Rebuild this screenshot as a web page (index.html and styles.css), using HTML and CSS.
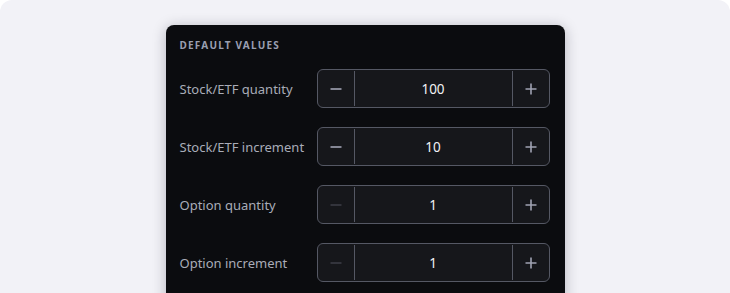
FILE: index.html
```html
<html lang="en">
	<head>
		<meta charset="UTF-8">
		<meta name="viewport" content="width=device-width, initial-scale=1.0">
		<title>Default values</title>
		<link rel="stylesheet" href="styles.css">
	</head>
	<body>
		<div class="backdrop">
			<div class="panel">
				<h3 class="panel-title">DEFAULT VALUES</h3>
				<div class="rows">
					<div class="row">
						<span class="row-label">Stock/ETF quantity</span>
						<div class="stepper">
							<button class="step minus">
								<svg width="12" height="12" viewBox="0 0 12 12"><path d="M0.5 6h11" /></svg>
							</button>
							<span class="value">100</span>
							<button class="step plus">
								<svg width="12" height="12" viewBox="0 0 12 12"><path d="M0.5 6h11M6 0.5v11" /></svg>
							</button>
						</div>
					</div>
					<div class="row">
						<span class="row-label">Stock/ETF increment</span>
						<div class="stepper">
							<button class="step minus">
								<svg width="12" height="12" viewBox="0 0 12 12"><path d="M0.5 6h11" /></svg>
							</button>
							<span class="value">10</span>
							<button class="step plus">
								<svg width="12" height="12" viewBox="0 0 12 12"><path d="M0.5 6h11M6 0.5v11" /></svg>
							</button>
						</div>
					</div>
					<div class="row">
						<span class="row-label">Option quantity</span>
						<div class="stepper">
							<button class="step minus" disabled>
								<svg width="12" height="12" viewBox="0 0 12 12"><path d="M0.5 6h11" /></svg>
							</button>
							<span class="value">1</span>
							<button class="step plus">
								<svg width="12" height="12" viewBox="0 0 12 12"><path d="M0.5 6h11M6 0.5v11" /></svg>
							</button>
						</div>
					</div>
					<div class="row">
						<span class="row-label">Option increment</span>
						<div class="stepper">
							<button class="step minus" disabled>
								<svg width="12" height="12" viewBox="0 0 12 12"><path d="M0.5 6h11" /></svg>
							</button>
							<span class="value">1</span>
							<button class="step plus">
								<svg width="12" height="12" viewBox="0 0 12 12"><path d="M0.5 6h11M6 0.5v11" /></svg>
							</button>
						</div>
					</div>
				</div>
			</div>
		</div>
	</body>
</html>
```
FILE: styles.css
```css
body {
	margin: 0;
	background-color: #ffffff;
	font-family: "Noto Sans", "Open Sans", sans-serif;
	overflow: hidden;
}
div.backdrop {
	height: 100vh;
	background-color: #f2f2f7;
	border-radius: 12px 12px 0 0;
	display: flex;
	justify-content: center;
	align-items: flex-start;
	padding-top: 25px;
	box-sizing: border-box;
	overflow: hidden;
}
div.panel {
	width: 399px;
	flex-shrink: 0;
	padding: 12px 15px 30px 14px;
	box-sizing: border-box;
	background-color: #0b0c0f;
	border-radius: 8px;
	box-shadow: 0 2px 14px rgba(20, 20, 40, 0.28);
}
h3.panel-title {
	margin: 0 0 16px 0;
	font-size: 10px;
	line-height: 16px;
	font-weight: 700;
	letter-spacing: 1.2px;
	color: #9a9fb1;
}
div.rows {
	display: flex;
	flex-direction: column;
	gap: 19px;
}
div.row {
	display: grid;
	grid-template-columns: 137px 1fr;
	align-items: center;
}
span.row-label {
	font-size: 13px;
	color: #a9acb8;
}
div.stepper {
	height: 39px;
	box-sizing: border-box;
	display: flex;
	align-items: stretch;
	background-color: #16171b;
	border: 1px solid #555864;
	border-radius: 6px;
}
button.step {
	width: 37px;
	margin: 1px 0;
	padding: 0;
	background: none;
	border: none;
	display: flex;
	align-items: center;
	justify-content: center;
	cursor: pointer;
	outline: none;
}
button.step svg path {
	stroke: #a0a3b3;
	stroke-width: 1.6;
	fill: none;
}
button.step:disabled {
	cursor: default;
}
button.step:disabled svg path {
	stroke: #3b3d45;
}
button.minus {
	border-right: 1px solid #555864;
}
button.plus {
	border-left: 1px solid #555864;
}
span.value {
	flex: 1;
	display: flex;
	align-items: center;
	justify-content: center;
	font-size: 13.5px;
	color: #f1f2f5;
}
```
